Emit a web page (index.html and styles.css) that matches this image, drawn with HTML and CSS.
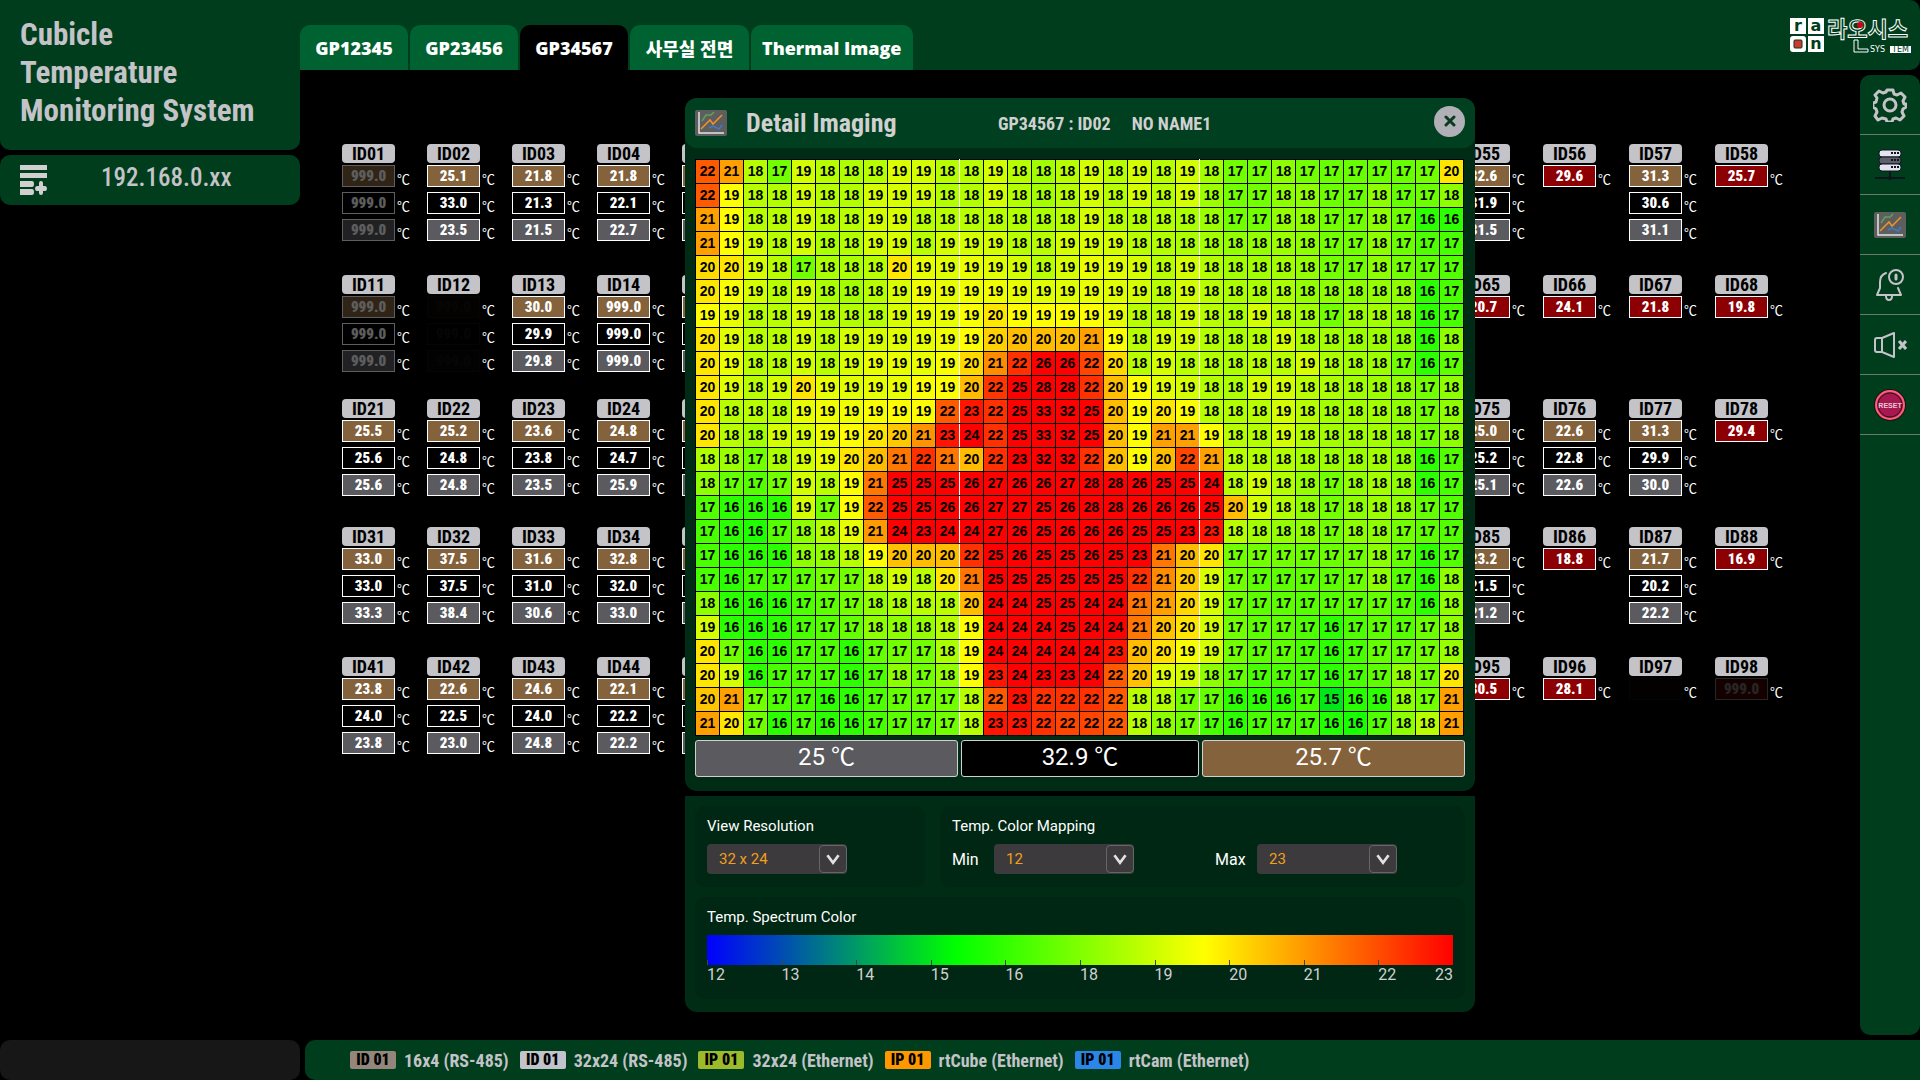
FILE: index.html
```html
<!DOCTYPE html>
<html lang="ko">
<head>
    <meta charset="UTF-8">
    <meta name="viewport" content="width=device-width, initial-scale=1.0">
    <title>Cubicle Temperature Monitoring System</title>
    <link rel="stylesheet" href="styles.css">
</head>
<body>
    <div class="layout">
        <!-- left column -->
        <aside class="side">
            <h1 class="brand">Cubicle<br>Temperature<br>Monitoring System</h1>
            <div class="server">
                <button type="button" class="icon-btn server-add" aria-label="Add server">
                    <svg width="27" height="30" viewBox="0 0 27 30" fill="#d0d0d0">
                        <rect x="0" y="0" width="27" height="5"/>
                        <rect x="0" y="8" width="27" height="5"/>
                        <path d="M0 16h12q2 0 2 3t-2 3H0z"/>
                        <path d="M0 24h12q2 0 2 3t-2 3H0z"/>
                        <path d="M21 16q2 0 2 2v3h2q2 0 2 2.500t-2 2.500h-2v2q0 2-2 2t-2-2v-2h-2q-2 0-2-2.500t2-2.500h2v-3q0-2 2-2z"/>
                    </svg>
                </button>
                <span class="server-ip">192.168.0.xx</span>
            </div>
        </aside>

        <!-- header -->
        <header class="topbar">
            <nav class="tabs">
                <a class="tab" href="#gp12345">GP12345</a>
                <a class="tab" href="#gp23456">GP23456</a>
                <a class="tab active" href="#gp34567">GP34567</a>
                <a class="tab" href="#office">사무실 전면</a>
                <a class="tab" href="#thermal">Thermal Image</a>
            </nav>
            <svg class="logo" width="122" height="56" viewBox="0 -14 122 56" role="img" aria-label="raon 라온시스 SYSTEM">
                <g fill="#fff">
                    <rect x="0" y="0" width="16" height="16"/>
                    <rect x="18" y="0" width="16" height="16"/>
                    <rect x="0" y="18" width="16" height="16" rx="3"/>
                    <rect x="18" y="18" width="16" height="16"/>
                </g>
                <g class="logo-letter">
                    <text x="8" y="13">r</text>
                    <text x="26" y="13">a</text>
                    <text x="26" y="31">n</text>
                </g>
                <rect x="4" y="22" width="8" height="8" rx="1" fill="#d03a2a" stroke="#003d1c"/>
                <text class="logo-name" x="37" y="19">라오시스</text>
                <path d="M64 22h4v9h10v3H64z" fill="none" stroke="#fff"/>
                <circle cx="70" cy="7" r="3" fill="#d00010"/>
                <text class="logo-sub" x="80" y="34">SYS</text>
                <rect x="100" y="28" width="21" height="7" fill="#fff"/>
                <text class="logo-sub dark" x="102" y="34">TEM</text>
            </svg>
        </header>

        <!-- sensor board -->
        <main class="board">
            <div class="sensors" id="sensorsLeft"></div>
            <div class="sensors sensors-right" id="sensorsRight"></div>

            <div class="dialog-layer">
                <section class="dialog">
                    <div class="dialog-head">
                        <svg class="dialog-icon" width="32" height="26" viewBox="0 0 32 26"><use href="#chartIcon"/></svg>
                        <h2 class="dialog-title">Detail Imaging</h2>
                        <p class="dialog-target"><span>GP34567 : ID02</span><span>NO NAME1</span></p>
                        <button type="button" class="dialog-close" aria-label="Close">
                            <svg width="12" height="12" viewBox="0 0 12 12" stroke="#0b3a20" stroke-width="3" stroke-linecap="round"><path d="M2 2l8 8M10 2l-8 8"/></svg>
                        </button>
                    </div>
                    <div class="dialog-body">
                        <table class="heat"><tbody id="heat"></tbody></table>
                        <div class="summary">
                            <div class="sum gray">25 ℃</div>
                            <div class="sum black">32.9 ℃</div>
                            <div class="sum brown">25.7 ℃</div>
                        </div>
                    </div>
                </section>

                <section class="options">
                    <div class="group">
                        <label class="group-title" for="resolution">View Resolution</label>
                        <div class="fields">
                            <span class="select">
                                <select id="resolution"><option>32 x 24</option></select>
                                <svg viewBox="0 0 28 28"><path d="M8 10l6 8 6-8"/></svg>
                            </span>
                        </div>
                    </div>
                    <div class="group">
                        <span class="group-title">Temp. Color Mapping</span>
                        <div class="fields">
                            <label class="field-name" for="min">Min</label>
                            <span class="select">
                                <select id="min"><option>12</option></select>
                                <svg viewBox="0 0 28 28"><path d="M8 10l6 8 6-8"/></svg>
                            </span>
                            <label class="field-name field-max" for="max">Max</label>
                            <span class="select">
                                <select id="max"><option>23</option></select>
                                <svg viewBox="0 0 28 28"><path d="M8 10l6 8 6-8"/></svg>
                            </span>
                        </div>
                    </div>
                    <div class="group group-wide">
                        <span class="group-title">Temp. Spectrum Color</span>
                        <div class="spectrum"><i></i><i></i><i></i><i></i><i></i><i></i><i></i><i></i><i></i><i></i></div>
                        <div class="scale">
                            <span>12</span><span>13</span><span>14</span><span>15</span><span>16</span><span>18</span><span>19</span><span>20</span><span>21</span><span class="last">22<b>23</b></span>
                        </div>
                    </div>
                </section>
            </div>
        </main>

        <!-- right tool rail -->
        <nav class="rail">
            <button type="button" class="rail-btn" aria-label="Settings">
                <svg width="34" height="34" viewBox="0 0 34 34" fill="none" stroke="#c3c3c8" stroke-width="3" stroke-linejoin="round">
                    <path d="M14 2h6l1 4 3 1 4-2 4 4-2 4 1 3h2v3l-3 2-1 3 2 4-4 4-4-2-3 1-1 3h-5l-1-3-4-1-4 2-3-4 2-4-1-3-3-2v-4l3-1 1-4-2-3 4-4 4 2 3-1z"/>
                    <circle cx="17" cy="17" r="6"/>
                </svg>
            </button>
            <button type="button" class="rail-btn" aria-label="Servers">
                <svg width="32" height="32" viewBox="0 0 32 32">
                    <g stroke="#10141c" stroke-width="1">
                        <rect x="5" y="1" width="22" height="7" rx="3" fill="#e2e4f0"/>
                        <rect x="5" y="8" width="22" height="7" rx="3" fill="#5c606c"/>
                        <rect x="5" y="15" width="22" height="7" rx="3" fill="#e2e4f0"/>
                        <path d="M16 22v6M1 29h30" stroke-width="2"/>
                    </g>
                    <path d="M17 4h2M20 4h2M23 4h2M17 11h2M20 11h2M23 11h2M17 18h2M20 18h2M23 18h2" stroke="#10141c" stroke-width="2"/>
                    <circle cx="16" cy="29" r="2" fill="#10141c"/>
                </svg>
            </button>
            <button type="button" class="rail-btn" aria-label="Detail imaging">
                <svg width="32" height="26" viewBox="0 0 32 26">
                    <g id="chartIcon">
                        <rect width="32" height="26" rx="2" fill="#5e5e5e"/>
                        <g fill="none" stroke-width="1.500">
                            <path d="M4 2v21h25" stroke="#e4e4e4"/>
                            <path d="M7 11l4-6h5l3-3" stroke="#5fa35a"/>
                            <path d="M6 19l9-9 3 4 9-9" stroke="#f0922a"/>
                            <path d="M14 18l4-2 6 3 3-4" stroke="#3c7cc8"/>
                        </g>
                    </g>
                </svg>
            </button>
            <button type="button" class="rail-btn" aria-label="Alarms">
                <svg width="32" height="34" viewBox="0 0 32 34" fill="none" stroke="#c3c3c8" stroke-width="2" stroke-linecap="round" stroke-linejoin="round">
                    <path d="M12 5q-6 2-6 9v6l-3 7h24l-3-7"/>
                    <path d="M12 28q0 4 3 4t3-4"/>
                    <circle cx="22" cy="9" r="7"/>
                    <path d="M22 7v4" stroke-width="3"/>
                </svg>
            </button>
            <button type="button" class="rail-btn" aria-label="Mute">
                <svg width="34" height="26" viewBox="0 0 34 26" fill="none" stroke="#c3c3c8" stroke-width="2" stroke-linejoin="round">
                    <path d="M9 6H4q-2 0-2 2v10q0 2 2 2h5zM9 6v14M9 6l12-5v24L9 20"/>
                    <path d="M26 9l7 8M33 9l-7 8" stroke-width="3"/>
                </svg>
            </button>
            <button type="button" class="rail-btn" aria-label="Reset">
                <svg width="34" height="34" viewBox="0 0 34 34">
                    <circle cx="17" cy="17" r="16" fill="#1c1216"/>
                    <circle cx="17" cy="17" r="14" fill="#a81850" stroke="#ff6078" stroke-width="2"/>
                    <circle cx="17" cy="17" r="12" fill="none" stroke="#30101c"/>
                    <text class="reset-text" x="17" y="20">RESET</text>
                </svg>
            </button>
        </nav>

        <!-- footer -->
        <div class="status"></div>
        <footer class="legend">
            <span class="legend-item"><b class="chip taupe">ID 01</b>16x4 (RS-485)</span>
            <span class="legend-item"><b class="chip silver">ID 01</b>32x24 (RS-485)</span>
            <span class="legend-item"><b class="chip lime">IP 01</b>32x24 (Ethernet)</span>
            <span class="legend-item"><b class="chip orange">IP 01</b>rtCube (Ethernet)</span>
            <span class="legend-item"><b class="chip blue">IP 01</b>rtCam (Ethernet)</span>
        </footer>
    </div>
    <script src="script.js"></script>
</body>
</html>
```
FILE: styles.css
```css
* {
    box-sizing: border-box;
}

body {
    margin: 0;
    background: #000;
    color: #c3c3c8;
    font-family: "Roboto Condensed", "Liberation Sans Narrow", Roboto, "Noto Sans CJK KR", sans-serif;
}

h1, h2, p {
    margin: 0;
}

button {
    border: 0;
    padding: 0;
    background: none;
    cursor: pointer;
}

svg {
    display: block;
}

.layout {
    display: grid;
    grid-template-columns: 300px 1fr 60px;
    grid-template-rows: 70px 1fr 40px;
    min-height: 100vh;
}

/* left column */
.side {
    grid-row: 1 / 3;
    display: flex;
    flex-direction: column;
    gap: 5px;
}

.brand {
    height: 150px;
    padding: 16px 20px;
    background: #003d1c;
    border-radius: 0 0 10px 10px;
    font-size: 31px;
    line-height: 38px;
    font-weight: 700;
    white-space: nowrap;
}

.server {
    display: flex;
    align-items: center;
    height: 50px;
    padding-left: 20px;
    background: #003d1c;
    border-radius: 10px;
}

.server-ip {
    margin-left: 54px;
    font-size: 25px;
    line-height: 46px;
    font-weight: 500;
    align-self: flex-start;
}

/* header */
.topbar {
    grid-column: 2 / 4;
    display: flex;
    align-items: flex-end;
    justify-content: space-between;
    background: #003d1c;
    border-radius: 0 10px 10px 0;
}

.tabs {
    display: flex;
    gap: 2px;
}

.tab {
    display: flex;
    align-items: center;
    justify-content: center;
    min-width: 108px;
    height: 45px;
    padding: 0 11px;
    background: #006230;
    border-radius: 10px 10px 0 0;
    color: #fff;
    font-family: "Open Sans", "Noto Sans CJK KR", sans-serif;
    font-size: 18px;
    font-weight: 800;
    text-decoration: none;
    white-space: nowrap;
}

.tab:lang(ko):nth-child(4) {
    min-width: 119px;
}

.tab.active {
    background: #000;
}

.logo {
    align-self: flex-start;
    margin: 4px 8px 0 0;
}

.logo-letter {
    fill: #003d1c;
    font-family: "DejaVu Sans", sans-serif;
    font-size: 16px;
    font-weight: 700;
    text-anchor: middle;
}

.logo-name {
    fill: none;
    stroke: #fff;
    font-family: "Noto Sans CJK KR", sans-serif;
    font-size: 22px;
    font-weight: 700;
}

.logo-sub {
    fill: #fff;
    font-family: "DejaVu Sans", sans-serif;
    font-size: 8px;
}

.logo-sub.dark {
    fill: #003d1c;
}

/* sensor board */
.board {
    position: relative;
    display: flex;
    justify-content: space-between;
    padding: 74px 59px 0 42px;
}

.sensors {
    display: grid;
    grid-template-columns: repeat(5, 85px);
    grid-template-rows: 131px 124px 128px 130px auto;
    align-content: start;
}

.sensors-right {
    grid-template-columns: repeat(4, 86px);
}

.sensor-id {
    width: 53px;
    height: 19px;
    margin-bottom: 2px;
    background: #c3c3c8;
    border-radius: 4px;
    color: #000;
    font-size: 18px;
    line-height: 19px;
    font-weight: 700;
    text-align: center;
}

.reading {
    display: flex;
    gap: 2px;
    height: 22px;
    margin-bottom: 5px;
}

.value {
    width: 53px;
    border: 1px solid #fff;
    color: #fff;
    font-size: 15px;
    line-height: 20px;
    font-weight: 900;
    text-align: center;
}

.unit {
    align-self: flex-end;
    color: #fff;
    font-family: "Noto Sans CJK KR", sans-serif;
    font-size: 13px;
    line-height: 16px;
}

.brown { background: #83623c; }
.black { background: #000; }
.gray { background: #5a5a5f; }
.red { background: #8c0004; }
.dim { opacity: 0.37; }
.faint { opacity: 0.15; }
.off { opacity: 0.02; }

/* detail dialog, lies over the board */
.dialog-layer {
    position: absolute;
    inset: 0;
    display: flex;
    flex-direction: column;
    align-items: center;
    gap: 5px;
    padding-top: 28px;
    pointer-events: none;
}

.dialog,
.options {
    width: 790px;
    background: #002b15;
    pointer-events: auto;
}

.dialog {
    border-radius: 12px;
}

.dialog-head {
    display: grid;
    grid-template-columns: 51px 252px 1fr 31px;
    align-items: center;
    height: 50px;
    padding: 0 10px;
    background: #004020;
    border-radius: 12px;
}

.dialog-title {
    color: #d0d0d0;
    font-size: 26px;
}

.dialog-target {
    display: flex;
    gap: 21px;
    color: #d0d0d0;
    font-size: 18px;
    font-weight: 700;
}

.dialog-close {
    display: grid;
    place-items: center;
    width: 31px;
    height: 31px;
    margin-top: -4px;
    background: #b0b0b6;
    border-radius: 50%;
}

.dialog-body {
    padding: 11px 10px 14px;
}

/* heat map */
.heat {
    border-collapse: collapse;
    table-layout: fixed;
    width: 769px;
}

.heat td {
    height: 24px;
    padding: 0;
    border: 1px solid #000;
    color: #000;
    font-family: "Liberation Sans", sans-serif;
    font-size: 14px;
    line-height: 23px;
    font-weight: 700;
    text-align: center;
}

.heat td:nth-child(11),
.heat td:nth-child(21) {
    border-right-color: #fff;
}

.heat td:nth-child(12),
.heat td:nth-child(22) {
    border-left-color: #fff;
}

.summary {
    display: grid;
    grid-template-columns: 263px 1fr 263px;
    gap: 3px;
    margin-top: 4px;
}

.sum {
    height: 37px;
    border: 1px solid #d0d0d0;
    border-radius: 3px;
    color: #fff;
    font-family: Roboto, "Noto Sans CJK KR", sans-serif;
    font-size: 24px;
    line-height: 33px;
    font-weight: 400;
    text-align: center;
}

/* options panel */
.options {
    display: grid;
    grid-template-columns: 230px 1fr;
    gap: 10px 15px;
    padding: 10px 10px 13px;
    border-radius: 0 0 12px 12px;
    color: #fff;
    font-family: Roboto, sans-serif;
    font-size: 16px;
}

.group {
    padding: 10px 12px 13px;
    background: #002713;
    border-radius: 10px;
}

.group-wide {
    grid-column: 1 / 3;
    padding-bottom: 14px;
}

.group-title {
    display: block;
    margin-bottom: 8px;
    font-size: 15px;
    line-height: 20px;
}

.fields {
    display: flex;
    align-items: center;
}

.field-name {
    width: 42px;
}

.field-max {
    margin-left: 81px;
}

.select {
    position: relative;
    width: 140px;
    height: 30px;
}

.select select {
    width: 100%;
    height: 30px;
    padding: 0 12px;
    border: 0;
    border-radius: 4px;
    background: #3c3a3c;
    color: #f0a01c;
    font-family: Roboto, sans-serif;
    font-size: 15px;
    appearance: none;
}

.select svg {
    position: absolute;
    top: 1px;
    right: 0;
    width: 28px;
    height: 28px;
    border: 1px solid #666;
    border-radius: 4px;
    fill: none;
    stroke: #e0e0e0;
    stroke-width: 3;
    pointer-events: none;
}

.spectrum {
    display: flex;
    align-items: flex-end;
    height: 30px;
    background: linear-gradient(to right, #00f, #0f0 33.33%, #ff0 66.67%, #f00);
}

.spectrum i {
    flex: 1;
    height: 5px;
    border-left: 1px solid #444;
}

.scale {
    display: flex;
    height: 20px;
    color: #d0d0d0;
    font-size: 16px;
    line-height: 20px;
}

.scale span {
    flex: 1;
}

.scale .last {
    display: flex;
    justify-content: space-between;
}

.scale b {
    font-weight: 400;
}

/* tool rail */
.rail {
    margin: 5px 0;
    background: #003d1c;
    border-radius: 10px;
}

.rail-btn {
    display: grid;
    place-items: center;
    width: 60px;
    height: 60px;
    border-bottom: 1px solid #6a7a70;
}

.reset-text {
    fill: #e8c8d4;
    font-family: "Liberation Sans", sans-serif;
    font-size: 7px;
    font-weight: 700;
    text-anchor: middle;
}

/* footer */
.status {
    background: #171717;
    border-radius: 10px;
}

.legend {
    grid-column: 2 / 4;
    display: flex;
    align-items: center;
    gap: 11px;
    margin-left: 5px;
    padding-left: 45px;
    background: #003d1c;
    border-radius: 10px 0 0 10px;
    font-size: 18px;
    font-weight: 700;
}

.legend-item {
    display: flex;
    align-items: center;
    gap: 8px;
    white-space: nowrap;
}

.chip {
    width: 46px;
    height: 18px;
    border-radius: 2px;
    color: #000;
    font-size: 16px;
    line-height: 18px;
    text-align: center;
}

.taupe { background: #94867a; }
.silver { background: #c3c3cb; }
.lime { background: #9cba2c; }
.orange { background: #ff9800; }
.blue { background: #2c86e8; }
```
FILE: script.js
```js
// id, readings, optional class for the value boxes
const leftSensors = [
    ['ID01', ['999.0', '999.0', '999.0'], 'dim'],
    ['ID02', ['25.1', '33.0', '23.5']],
    ['ID03', ['21.8', '21.3', '21.5']],
    ['ID04', ['21.8', '22.1', '22.7']],
    ['', ['', '', '']],
    ['ID11', ['999.0', '999.0', '999.0'], 'dim'],
    ['ID12', ['999.0', '999.0', '999.0'], 'off'],
    ['ID13', ['30.0', '29.9', '29.8']],
    ['ID14', ['999.0', '999.0', '999.0']],
    ['', ['', '', '']],
    ['ID21', ['25.5', '25.6', '25.6']],
    ['ID22', ['25.2', '24.8', '24.8']],
    ['ID23', ['23.6', '23.8', '23.5']],
    ['ID24', ['24.8', '24.7', '25.9']],
    ['', ['', '', '']],
    ['ID31', ['33.0', '33.0', '33.3']],
    ['ID32', ['37.5', '37.5', '38.4']],
    ['ID33', ['31.6', '31.0', '30.6']],
    ['ID34', ['32.8', '32.0', '33.0']],
    ['', ['', '', '']],
    ['ID41', ['23.8', '24.0', '23.8']],
    ['ID42', ['22.6', '22.5', '23.0']],
    ['ID43', ['24.6', '24.0', '24.8']],
    ['ID44', ['22.1', '22.2', '22.2']],
    ['', ['', '', '']]
];

const rightSensors = [
    ['ID55', ['32.6', '31.9', '31.5']],
    ['ID56', ['29.6']],
    ['ID57', ['31.3', '30.6', '31.1']],
    ['ID58', ['25.7']],
    ['ID65', ['20.7']],
    ['ID66', ['24.1']],
    ['ID67', ['21.8']],
    ['ID68', ['19.8']],
    ['ID75', ['25.0', '25.2', '25.1']],
    ['ID76', ['22.6', '22.8', '22.6']],
    ['ID77', ['31.3', '29.9', '30.0']],
    ['ID78', ['29.4']],
    ['ID85', ['23.2', '21.5', '21.2']],
    ['ID86', ['18.8']],
    ['ID87', ['21.7', '20.2', '22.2']],
    ['ID88', ['16.9']],
    ['ID95', ['30.5']],
    ['ID96', ['28.1']],
    ['ID97', [''], 'off'],
    ['ID98', ['999.0'], 'faint']
];

function drawSensors(target, list) {
    const kinds = ['brown', 'black', 'gray'];
    document.getElementById(target).innerHTML = list.map(([id, values, state]) => {
        const rows = values.map((v, i) => {
            const kind = values.length === 1 ? 'red' : kinds[i];
            return `<div class="reading"><div class="value ${kind} ${state || ''}">${v}</div><span class="unit">℃</span></div>`;
        }).join('');
        return `<div class="sensor"><div class="sensor-id">${id}</div>${rows}</div>`;
    }).join('');
}

drawSensors('sensorsLeft', leftSensors);
drawSensors('sensorsRight', rightSensors);

// 32 x 24 frame
const frame = [
    '22 21 18 17 19 18 18 18 19 19 18 18 19 18 18 18 19 18 19 18 19 18 17 17 18 17 17 17 17 17 17 20',
    '22 19 18 18 19 18 18 19 19 19 18 18 19 18 18 18 19 18 19 18 19 18 17 17 18 18 17 17 18 17 17 18',
    '21 19 18 18 19 18 18 19 19 18 18 18 18 18 18 18 19 18 18 18 18 18 17 17 18 18 17 17 18 17 16 16',
    '21 19 19 18 19 18 18 19 19 18 19 19 19 18 18 19 19 19 18 18 18 18 18 18 18 18 17 17 18 17 17 17',
    '20 20 19 18 17 18 18 18 20 19 19 19 19 19 18 19 19 19 19 18 19 18 18 18 18 18 17 17 18 17 17 17',
    '20 19 19 18 19 18 18 18 19 19 19 19 19 19 19 19 19 19 19 18 19 18 18 18 18 18 18 18 18 18 16 17',
    '19 19 18 18 19 18 18 18 19 19 19 19 20 19 19 19 19 19 18 18 19 18 18 19 18 18 17 18 18 18 16 17',
    '20 19 18 18 19 18 19 19 19 19 19 19 20 20 20 20 21 19 18 19 19 18 18 18 19 18 18 18 18 18 16 18',
    '20 19 18 18 19 18 19 19 19 19 19 20 21 22 26 26 22 20 18 19 18 18 18 18 18 19 18 18 18 17 16 17',
    '20 19 18 19 20 19 19 19 19 19 19 20 22 25 28 28 22 20 19 19 19 18 18 19 19 18 18 18 18 18 17 18',
    '20 18 18 18 19 19 19 19 19 19 22 23 22 25 33 32 25 20 19 20 19 18 18 18 19 18 18 18 18 18 17 18',
    '20 18 18 19 19 19 19 20 20 21 23 24 22 25 33 32 25 20 19 21 21 19 18 18 19 18 18 18 18 18 17 18',
    '18 18 17 18 19 19 20 20 21 22 21 20 22 23 32 32 22 20 19 20 22 21 18 18 18 18 18 18 18 18 16 17',
    '18 17 17 17 19 18 19 21 25 25 25 26 27 26 26 27 28 28 26 25 25 24 18 19 18 18 17 18 18 18 16 17',
    '17 16 16 16 19 17 19 22 25 25 26 26 27 27 25 26 28 28 26 26 26 25 20 19 18 18 17 18 18 18 17 17',
    '17 16 16 17 18 18 19 21 24 23 24 24 27 26 25 26 26 26 25 25 23 23 18 18 18 18 17 18 18 17 17 17',
    '17 16 16 16 18 18 18 19 20 20 20 22 25 26 25 25 26 25 23 21 20 20 17 17 17 17 17 17 18 17 16 17',
    '17 16 17 17 17 17 17 18 19 18 20 21 25 25 25 25 25 25 22 21 20 19 17 17 17 17 17 17 18 17 16 18',
    '18 16 16 16 17 17 17 18 18 18 18 20 24 24 25 25 24 24 21 21 20 19 17 17 17 17 17 17 17 17 16 18',
    '19 16 16 16 17 17 17 18 18 18 18 19 24 24 24 25 24 24 21 20 20 19 17 17 17 17 16 17 17 17 17 18',
    '20 17 16 16 17 17 16 17 17 17 18 19 24 24 24 24 24 23 20 20 19 19 17 17 17 17 16 17 17 17 17 18',
    '20 19 16 17 17 17 16 17 18 17 18 19 23 24 23 23 24 22 20 19 19 18 17 17 17 17 16 17 17 18 17 20',
    '20 21 17 17 17 16 16 17 17 17 17 18 22 23 22 22 22 22 18 18 17 17 16 16 16 17 15 16 16 18 17 21',
    '21 20 17 16 17 16 16 17 17 17 17 18 23 23 22 22 22 22 18 18 17 17 16 17 17 17 16 16 17 18 18 21'
].map(line => line.split(' ').map(Number));

const MIN = 12;
const MAX = 23;

// blue -> green -> yellow -> red
function tempColor(t) {
    const p = Math.min(Math.max((t - MIN) / (MAX - MIN), 0), 1) * 3;
    if (p < 1) return `rgb(0, ${Math.round(p * 255)}, ${Math.round((1 - p) * 255)})`;
    if (p < 2) return `rgb(${Math.round((p - 1) * 255)}, 255, 0)`;
    return `rgb(255, ${Math.round((3 - p) * 255)}, 0)`;
}

// lean each pixel towards its neighbours, within the rounding of its reading
function smooth(x, y) {
    let sum = 0;
    let count = 0;
    for (let j = y - 1; j <= y + 1; j++) {
        for (let i = x - 1; i <= x + 1; i++) {
            if (frame[j] && frame[j][i] !== undefined) {
                sum += frame[j][i];
                count++;
            }
        }
    }
    const v = frame[y][x];
    return Math.min(Math.max(sum / count, v - 0.3), v + 0.3);
}

document.getElementById('heat').innerHTML = frame.map((row, y) =>
    '<tr>' + row.map((v, x) => `<td style="background:${tempColor(smooth(x, y))}">${v}</td>`).join('') + '</tr>'
).join('');
```
